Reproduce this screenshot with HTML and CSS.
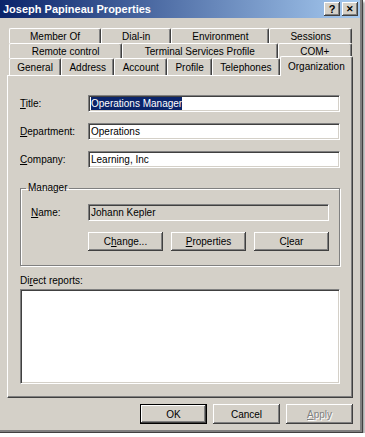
FILE: index.html
```html
<!DOCTYPE html>
<html lang="en">
<head>
  <meta charset="UTF-8">
  <meta name="viewport" content="width=device-width, initial-scale=1.0">
  <title>Joseph Papineau Properties</title>
  <link rel="stylesheet" href="styles.css">
</head>
<body>

  <div class="window">
    <div class="titlebar">
      <span class="caption">Joseph Papineau Properties</span>
      <div class="caption-buttons">
        <span class="cap-btn">?</span>
        <span class="cap-btn close">&#x2715;</span>
      </div>
    </div>

    <div class="tabs">
      <div class="tab-row">
        <div class="tab">Member Of</div>
        <div class="tab">Dial-in</div>
        <div class="tab">Environment</div>
        <div class="tab">Sessions</div>
      </div>
      <div class="tab-row">
        <div class="tab">Remote control</div>
        <div class="tab">Terminal Services Profile</div>
        <div class="tab">COM+</div>
      </div>
      <div class="tab-row front">
        <div class="tab">General</div>
        <div class="tab">Address</div>
        <div class="tab">Account</div>
        <div class="tab">Profile</div>
        <div class="tab">Telephones</div>
        <div class="tab selected">Organization</div>
      </div>
    </div>

    <div class="panel">
      <div class="fields">
        <label><u>T</u>itle:</label>
        <div class="textbox"><span class="selection">Operations Manager</span></div>
        <label><u>D</u>epartment:</label>
        <div class="textbox">Operations</div>
        <label><u>C</u>ompany:</label>
        <div class="textbox">Learning, Inc</div>
      </div>

      <fieldset class="group">
        <legend>Manager</legend>
        <div class="name-row">
          <label><u>N</u>ame:</label>
          <div class="textbox readonly">Johann Kepler</div>
        </div>
        <div class="group-buttons">
          <button>C<u>h</u>ange...</button>
          <button><u>P</u>roperties</button>
          <button>C<u>l</u>ear</button>
        </div>
      </fieldset>

      <div class="reports-label">Di<u>r</u>ect reports:</div>
      <div class="listbox"></div>
    </div>

    <div class="footer">
      <button class="default">OK</button>
      <button>Cancel</button>
      <button class="disabled"><u>A</u>pply</button>
    </div>
  </div>

</body>
</html>
```

FILE: styles.css
```css
body {
  margin: 0;
  background: #ffffff;
  font-family: "Liberation Sans", Arial, sans-serif;
  font-size: 10px;
  color: #000;
}

.window {
  width: 363px;
  height: 433px;
  background: #d4d0c8;
  box-sizing: border-box;
  border-right: 1px solid #404040;
  border-bottom: 1px solid #404040;
  box-shadow: inset -2px -2px 0 #808080, 2px 2px 2px rgba(0, 0, 0, 0.35);
  display: flex;
  flex-direction: column;
}

/* title bar */
.titlebar {
  height: 18px;
  margin-right: 2px;
  background: linear-gradient(to right, #0a246a, #a6caf0);
  display: flex;
  align-items: center;
  justify-content: space-between;
  padding: 0 2px 0 3px;
}

.caption {
  color: #fff;
  font-weight: bold;
  font-size: 11px;
}

.caption-buttons {
  display: flex;
  gap: 2px;
}

.cap-btn {
  width: 16px;
  height: 14px;
  box-sizing: border-box;
  background: #d4d0c8;
  box-shadow: inset -1px -1px #404040, inset 1px 1px #fff, inset -2px -2px #808080;
  font-size: 11px;
  font-weight: bold;
  line-height: 14px;
  text-align: center;
}

.cap-btn.close {
  font-size: 9px;
}

/* tabs */
.tabs {
  margin: 10px 10px 0 9px;
}

.tab-row {
  display: flex;
  height: 15px;
}

.tab-row.front {
  height: 17px;
}

.tab {
  flex: 1 1 auto;
  padding: 0 6px;
  box-sizing: border-box;
  border-left: 1px solid #fff;
  border-top: 1px solid #fff;
  border-right: 1px solid #404040;
  box-shadow: inset -1px 0 #808080;
  border-radius: 2px 2px 0 0;
  display: flex;
  align-items: center;
  justify-content: center;
  white-space: nowrap;
}

.tab.selected {
  position: relative;
  margin: -2px -1px -1px 0;
  background: #d4d0c8;
  z-index: 1;
  padding-bottom: 1px;
}

/* page */
.panel {
  margin: 0 9px 0 7px;
  height: 323px;
  box-sizing: border-box;
  border-left: 1px solid #fff;
  border-top: 1px solid #fff;
  border-right: 1px solid #404040;
  border-bottom: 1px solid #404040;
  box-shadow: inset -1px -1px #808080;
  padding: 19px 12px 0 12px;
}

.fields {
  display: grid;
  grid-template-columns: 68px 1fr;
  row-gap: 11px;
  align-items: center;
}

.textbox {
  height: 17px;
  box-sizing: border-box;
  background: #fff;
  border-top: 1px solid #808080;
  border-left: 1px solid #808080;
  border-right: 1px solid #fff;
  border-bottom: 1px solid #fff;
  box-shadow: inset 1px 1px #404040, inset -1px -1px #d4d0c8;
  padding: 0 2px;
  line-height: 15px;
  white-space: nowrap;
}

.selection {
  background: #0a246a;
  color: #fff;
  padding: 1px 0;
}

.textbox.readonly {
  background: #d4d0c8;
}

.group {
  margin: 14px 0 0 0;
  padding: 10px 10px 14px 10px;
  border: 1px solid #808080;
  box-shadow: 1px 1px 0 #fff, inset 1px 1px 0 #fff;
}

.group legend {
  padding: 0 2px;
  margin-left: -5px;
  line-height: 12px;
}

.name-row {
  display: grid;
  grid-template-columns: 57px 1fr;
  align-items: center;
}

.group-buttons {
  display: flex;
  gap: 8px;
  margin: 11px 0 0 57px;
}

.group-buttons button {
  flex: 1;
  height: 19px;
}

button {
  font-family: "Liberation Sans", Arial, sans-serif;
  font-size: 10px;
  background: #d4d0c8;
  border: none;
  padding: 0;
  color: #000;
  box-shadow: inset -1px -1px #404040, inset 1px 1px #fff, inset -2px -2px #808080;
}

.reports-label {
  margin-top: 9px;
  line-height: 12px;
}

.listbox {
  margin-top: 2px;
  height: 95px;
  box-sizing: border-box;
  background: #fff;
  border-top: 1px solid #808080;
  border-left: 1px solid #808080;
  border-right: 1px solid #fff;
  border-bottom: 1px solid #fff;
  box-shadow: inset 1px 1px #404040, inset -1px -1px #d4d0c8;
}

.footer {
  display: flex;
  justify-content: flex-end;
  gap: 6px;
  margin: 6px 9px 0 0;
}

.footer button {
  width: 67px;
  height: 20px;
}

.footer button.default {
  box-shadow: inset 0 0 0 1px #000, inset -2px -2px #404040, inset 2px 2px #fff, inset -3px -3px #808080;
}

.footer button.disabled {
  color: #808080;
  text-shadow: 1px 1px 0 #fff;
}
```
